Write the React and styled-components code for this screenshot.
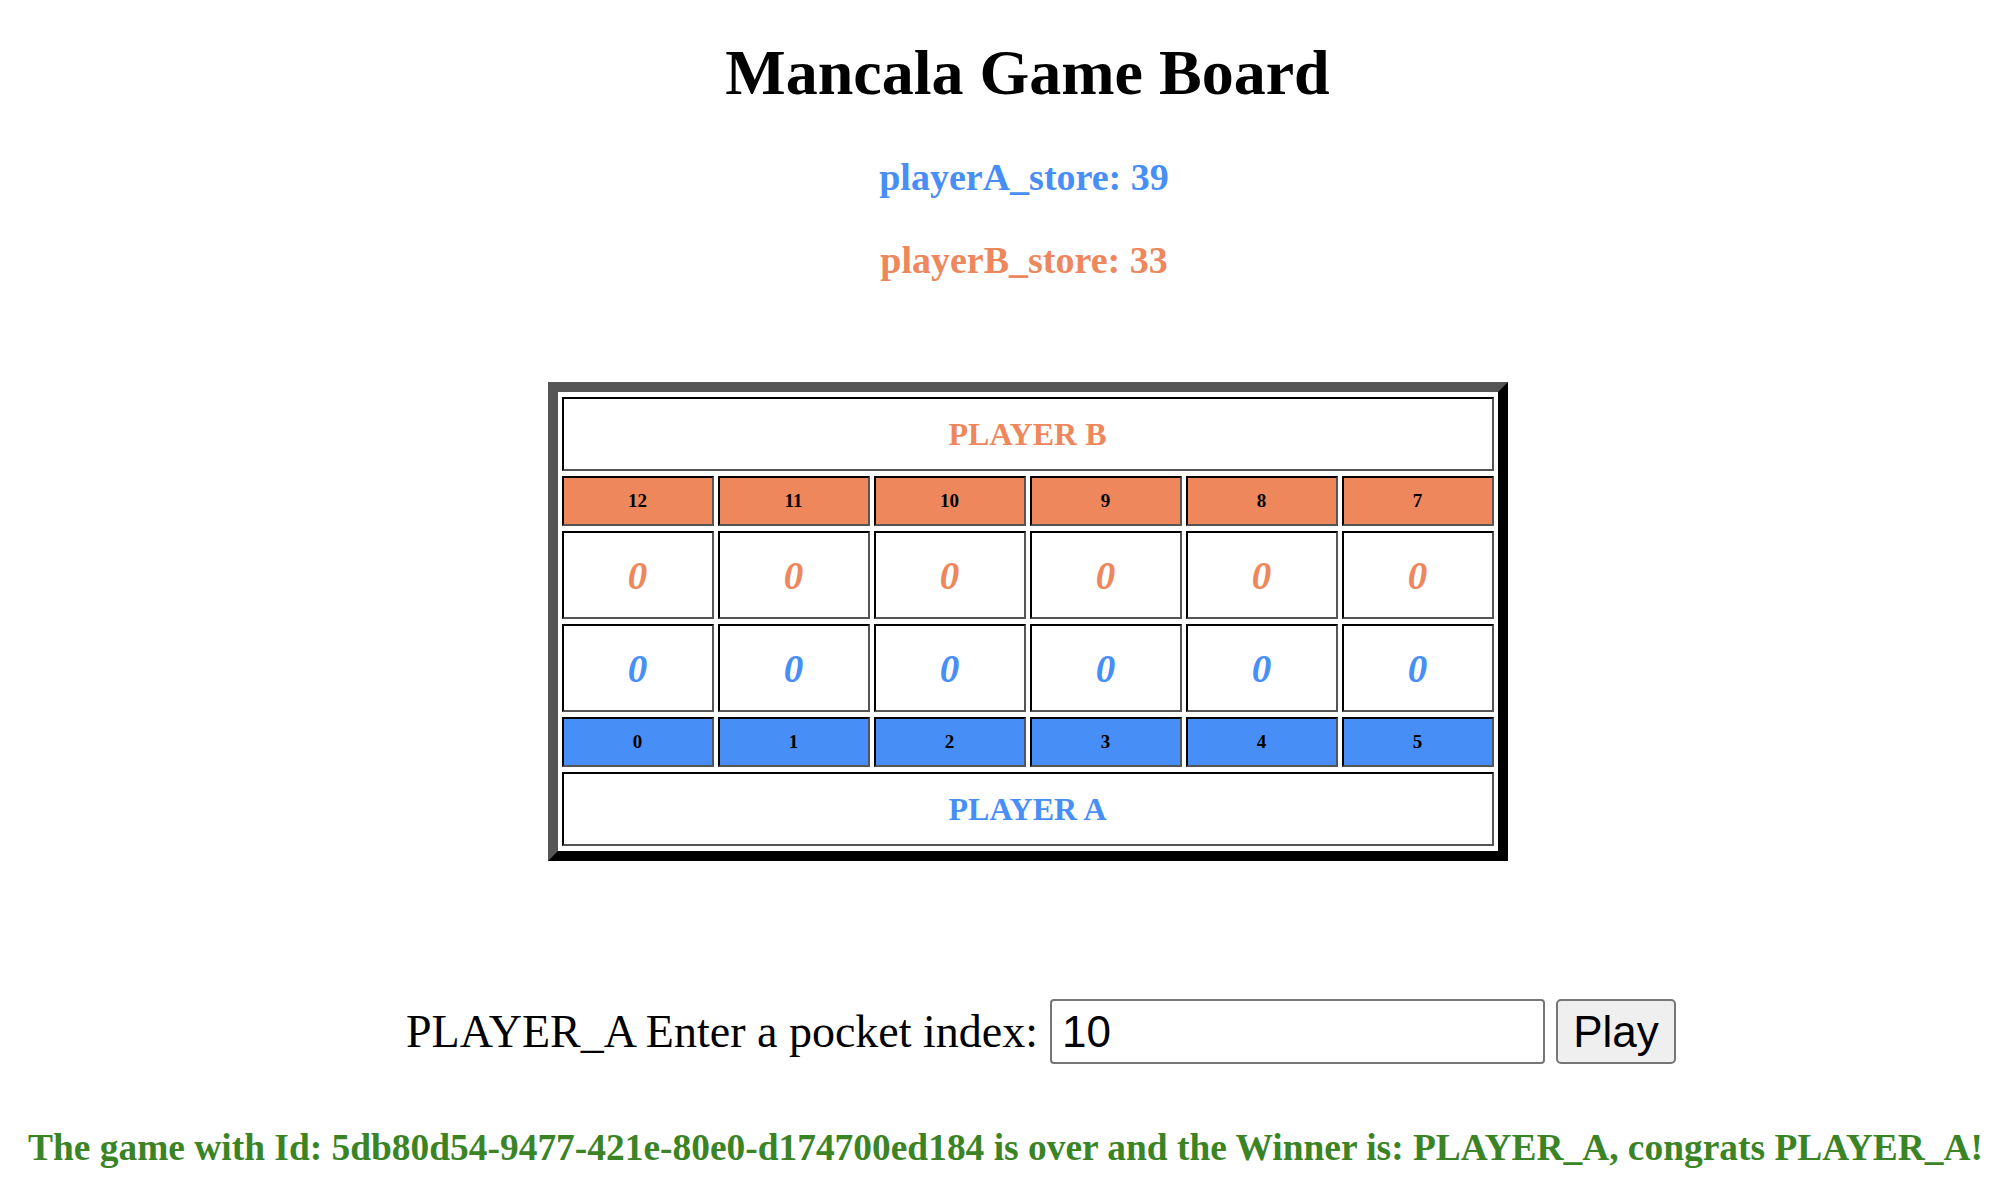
import React, { useState } from 'react';
import styled, { createGlobalStyle } from 'styled-components';

const ORANGE = '#ee875b';
const BLUE = '#478ef6';

const GlobalStyle = createGlobalStyle`
  body {
    margin: 0;
    background: #fff;
    font-family: "Liberation Serif", "Times New Roman", serif;
    color: #000;
  }
`;

const Page = styled.div`
  display: flex;
  flex-direction: column;
  align-items: center;
  padding-left: 44px;
`;

const Title = styled.h1`
  margin: 36px 0 0;
  font-size: 64px;
  line-height: 74px;
  font-weight: bold;
`;

const Store = styled.h3`
  margin: ${props => props.$gap}px 0 0;
  padding-right: 7px;
  font-size: 38px;
  line-height: 43px;
  font-weight: bold;
  color: ${props => (props.$player === 'A' ? BLUE : ORANGE)};
`;

const Board = styled.div`
  margin-top: 100px;
  width: 960px;
  box-sizing: border-box;
  display: grid;
  grid-template-columns: repeat(6, 1fr);
  gap: 5px 4px;
  padding: 5px 4px;
  border: 10px solid;
  border-color: #555 #000 #000 #555;
  background: #fff;
`;

const Cell = styled.div`
  box-sizing: border-box;
  border: 2px solid;
  border-color: #000 #555 #555 #000;
  display: flex;
  align-items: center;
  justify-content: center;
`;

const PlayerCell = styled(Cell)`
  grid-column: 1 / -1;
  height: 74px;
  font-size: 32px;
  font-weight: bold;
  color: ${props => (props.$player === 'A' ? BLUE : ORANGE)};
`;

const IndexCell = styled(Cell)`
  height: 50px;
  font-size: 19px;
  font-weight: bold;
  background: ${props => (props.$player === 'A' ? BLUE : ORANGE)};
`;

const PitCell = styled(Cell)`
  height: 88px;
  font-size: 39px;
  font-weight: bold;
  font-style: italic;
  color: ${props => (props.$player === 'A' ? BLUE : ORANGE)};
`;

const MoveRow = styled.form`
  margin-top: 138px;
  padding-left: 27px;
  display: flex;
  align-items: center;
  gap: 12px;
  font-size: 46px;
`;

const PitInput = styled.input`
  width: 495px;
  height: 65px;
  box-sizing: border-box;
  border: 2px solid #767676;
  border-radius: 4px;
  padding: 0 10px;
  font-family: "Liberation Sans", Arial, sans-serif;
  font-size: 44px;
  color: #000;
`;

const PlayButton = styled.button`
  margin-left: -1px;
  width: 120px;
  height: 65px;
  box-sizing: border-box;
  border: 2px solid #767676;
  border-radius: 5px;
  background: #efefef;
  font-family: "Liberation Sans", Arial, sans-serif;
  font-size: 44px;
  color: #000;
  padding: 0;
`;

const Result = styled.h3`
  margin: 62px 0 0;
  text-align: center;
  font-size: 37.44px;
  line-height: 43px;
  font-weight: bold;
  color: #3b8426;
  white-space: nowrap;
`;

const topPits = [12, 11, 10, 9, 8, 7];
const bottomPits = [0, 1, 2, 3, 4, 5];

const App = () => {
  const [pocket, setPocket] = useState('10');
  const pits = Array(14).fill(0);

  return (
    <>
      <GlobalStyle />
      <Page>
        <Title>Mancala Game Board</Title>
        <Store $player="A" $gap={46}>playerA_store: 39</Store>
        <Store $player="B" $gap={40}>playerB_store: 33</Store>
        <Board>
          <PlayerCell $player="B">PLAYER B</PlayerCell>
          {topPits.map(i => (
            <IndexCell key={'bi' + i} $player="B">{i}</IndexCell>
          ))}
          {topPits.map(i => (
            <PitCell key={'bp' + i} $player="B">{pits[i]}</PitCell>
          ))}
          {bottomPits.map(i => (
            <PitCell key={'ap' + i} $player="A">{pits[i]}</PitCell>
          ))}
          {bottomPits.map(i => (
            <IndexCell key={'ai' + i} $player="A">{i}</IndexCell>
          ))}
          <PlayerCell $player="A">PLAYER A</PlayerCell>
        </Board>
        <MoveRow onSubmit={e => e.preventDefault()}>
          <span>PLAYER_A Enter a pocket index:</span>
          <PitInput value={pocket} onChange={e => setPocket(e.target.value)} />
          <PlayButton type="submit">Play</PlayButton>
        </MoveRow>
      </Page>
      <Result>
        The game with Id: 5db80d54-9477-421e-80e0-d174700ed184 is over and the Winner is: PLAYER_A, congrats PLAYER_A!
      </Result>
    </>
  );
};

export default App;
